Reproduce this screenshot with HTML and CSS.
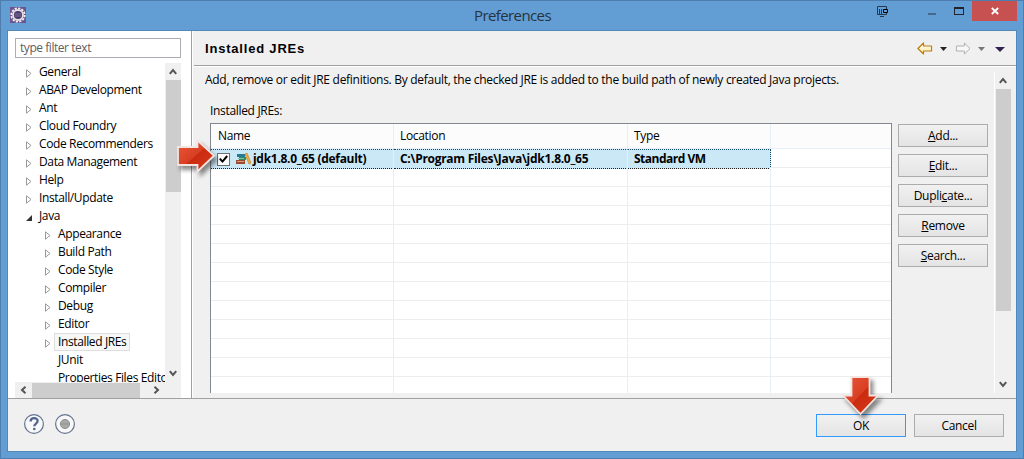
FILE: index.html
```
<!DOCTYPE html>
<html lang="en">
<head>
<meta charset="utf-8">
<title>Preferences</title>
<link rel="stylesheet" href="styles.css">
</head>
<body>
<div class="window">
  <header class="titlebar">
    <svg class="app-icon" width="16" height="16" viewBox="0 0 16 16"><rect width="16" height="16" fill="#6a5590"/><circle cx="8" cy="8" r="6.700" fill="none" stroke="#f4f0ee" stroke-width="1.800" stroke-dasharray="2.200 1.300"/><circle cx="8" cy="8" r="5" fill="#4a3a6c" stroke="#e6e0e2" stroke-width="1.800"/><path d="M4.500 7h7M4.500 9h7" stroke="#7d719c"/></svg>
    <h1 class="title">Preferences</h1>
    <svg class="dock-icon" width="12" height="12" viewBox="0 0 12 12"><path d="M.5 .5h9v8h-9zM2.500 3v5M4.500 3v5M3 10.500h4" fill="none" stroke="#27384b"/><path d="M6.500 3.500h4v3h-4z" fill="#629ed3" stroke="#000"/></svg>
    <i class="minimize"></i><i class="maximize"></i>
    <span class="close"><svg width="8" height="8" viewBox="0 0 8 8"><path d="M.8 1l6.400 6M7.200 1l-6.400 6" stroke="#fff" stroke-width="1.800"/></svg></span>
  </header>
  <main class="client">
    <div class="upper">
      <aside class="sidebar">
        <div class="filter">type filter text</div>
        <div class="tree-box">
          <ul class="tree">
            <li><svg class="tw"><use href="#closed"/></svg><span>General</span></li>
            <li><svg class="tw"><use href="#closed"/></svg><span>ABAP Development</span></li>
            <li><svg class="tw"><use href="#closed"/></svg><span>Ant</span></li>
            <li><svg class="tw"><use href="#closed"/></svg><span>Cloud Foundry</span></li>
            <li><svg class="tw"><use href="#closed"/></svg><span>Code Recommenders</span></li>
            <li><svg class="tw"><use href="#closed"/></svg><span>Data Management</span></li>
            <li><svg class="tw"><use href="#closed"/></svg><span>Help</span></li>
            <li><svg class="tw"><use href="#closed"/></svg><span>Install/Update</span></li>
            <li><svg class="tw"><use href="#open"/></svg><span>Java</span></li>
            <li class="child"><svg class="tw"><use href="#closed"/></svg><span>Appearance</span></li>
            <li class="child"><svg class="tw"><use href="#closed"/></svg><span>Build Path</span></li>
            <li class="child"><svg class="tw"><use href="#closed"/></svg><span>Code Style</span></li>
            <li class="child"><svg class="tw"><use href="#closed"/></svg><span>Compiler</span></li>
            <li class="child"><svg class="tw"><use href="#closed"/></svg><span>Debug</span></li>
            <li class="child"><svg class="tw"><use href="#closed"/></svg><span>Editor</span></li>
            <li class="child"><svg class="tw"><use href="#closed"/></svg><span class="chosen">Installed JREs</span></li>
            <li class="child"><svg class="tw"></svg><span>JUnit</span></li>
            <li class="child"><svg class="tw"></svg><span>Properties Files Editor</span></li>
          </ul>
          <div class="vscroll tree-v"><svg class="chev"><use href="#up"/></svg><i class="thumb"></i><svg class="chev end"><use href="#down"/></svg></div>
          <div class="hscroll"><svg class="hchev"><use href="#left"/></svg><i class="thumb"></i><svg class="hchev"><use href="#right"/></svg></div>
        </div>
      </aside>
      <section class="page">
        <div class="page-head">
          <h2>Installed JREs</h2>
          <svg class="nav" width="92" height="14" viewBox="0 0 92 14">
            <defs><linearGradient id="gold" x2="0" y2="1"><stop stop-color="#fff"/><stop offset="1" stop-color="#ffe9a0"/></linearGradient></defs>
            <path d="M.9 6.500L6.500 1v3h8v5h-8v3z" fill="url(#gold)" stroke="#bf7d11" stroke-width="1.200" stroke-linejoin="round"/>
            <path d="M23 5h7l-3.500 4z" fill="#222"/>
            <path d="M53 6.500L47.400 1v3h-8v5h8v3z" fill="#f7f7f7" stroke="#b0b0b0" stroke-linejoin="round"/>
            <path d="M61 5h7l-3.500 4z" fill="#77777b"/>
            <path d="M78 5h10l-5 5z" fill="#31214e"/>
          </svg>
        </div>
        <div class="page-scroll">
          <div class="content">
            <p class="desc">Add, remove or edit JRE definitions. By default, the checked JRE is added to the build path of newly created Java projects.</p>
            <p class="label">Installed <u>J</u>REs:</p>
            <div class="table-row">
              <div class="table">
                <div class="tr th"><span>Name</span><span>Location</span><span>Type</span><span></span></div>
                <div class="tr sel"><span class="name"><i class="check"><svg width="9" height="9" viewBox="0 0 9 9"><path d="M.8 3.600l2.700 3L8.200 1" fill="none" stroke="#000" stroke-width="2"/></svg></i><svg class="books" width="15" height="12" viewBox="0 0 15 12"><path d="M1 1h8v3H1z" fill="#27799a"/><path d="M3 4h7v3H3z" fill="#368c62"/><path d="M2 5h6v1H2z" fill="#7fc29b"/><path d="M0 7h9v4H0z" fill="#9c4a31"/><path d="M1 8.500h7" stroke="#d99a7c"/><path d="M9 1l2-1 4 10-2 1z" fill="#edb139" stroke="#c27b12" stroke-width=".6"/></svg><b>jdk1.8.0_65 (default)</b></span><span><b>C:\Program Files\Java\jdk1.8.0_65</b></span><span><b class="vm">Standard VM</b></span><span></span></div>
                <div class="tr"><span></span><span></span><span></span><span></span></div><div class="tr"><span></span><span></span><span></span><span></span></div><div class="tr"><span></span><span></span><span></span><span></span></div><div class="tr"><span></span><span></span><span></span><span></span></div><div class="tr"><span></span><span></span><span></span><span></span></div><div class="tr"><span></span><span></span><span></span><span></span></div><div class="tr"><span></span><span></span><span></span><span></span></div><div class="tr"><span></span><span></span><span></span><span></span></div><div class="tr"><span></span><span></span><span></span><span></span></div><div class="tr"><span></span><span></span><span></span><span></span></div><div class="tr"><span></span><span></span><span></span><span></span></div><div class="tr"><span></span><span></span><span></span><span></span></div>
              </div>
              <div class="actions">
                <button><span><u>A</u>dd...</span></button>
                <button><span><u>E</u>dit...</span></button>
                <button><span>Dupli<u>c</u>ate...</span></button>
                <button><span><u>R</u>emove</span></button>
                <button><span><u>S</u>earch...</span></button>
              </div>
            </div>
          </div>
          <div class="vscroll page-v"><svg class="chev"><use href="#up"/></svg><i class="thumb"></i><svg class="chev end"><use href="#down"/></svg></div>
        </div>
      </section>
    </div>
    <footer class="footer">
      <svg class="foot-icons" width="54" height="22" viewBox="0 0 54 22">
        <circle cx="11" cy="11" r="9.400" fill="#f8f8fa" stroke="#64748f" stroke-width="1.200"/>
        <path d="M7.600 8.500c0-4.300 7-4.300 7-.4 0 2.500-3.300 2.500-3.300 5.100" fill="none" stroke="#52658c" stroke-width="2.300"/><circle cx="11.300" cy="16" r="1.300" fill="#52658c"/>
        <circle cx="42" cy="11" r="9.400" fill="#f8f8fa" stroke="#64748f" stroke-width="1.200"/>
        <circle cx="42" cy="11" r="4.600" fill="#a8a8a8" stroke="#909090"/><path d="M38 11h8" stroke="#929292"/>
      </svg>
      <button class="ok"><span>OK</span></button>
      <button><span>Cancel</span></button>
    </footer>
  </main>
</div>
<svg class="callout right" width="46" height="42" viewBox="0 0 46 42">
  <defs><linearGradient id="red" x2="1" y2="1"><stop stop-color="#e8583c"/><stop offset=".48" stop-color="#d93f22"/><stop offset=".5" stop-color="#cb2c10"/><stop offset="1" stop-color="#d73a1c"/></linearGradient></defs>
  <path d="M2 9h19.500V2.500L38 17.700 21.500 33.500V27H2z" fill="url(#red)" stroke="#f3e4e0" stroke-width="1.800"/>
</svg>
<svg class="callout down" width="50" height="48" viewBox="0 0 50 48">
  <path d="M12.500 2h18v18.500h8.500L21.500 39 4 20.500h8.500z" fill="url(#red)" stroke="#f3e4e0" stroke-width="1.800"/>
</svg>
<svg class="defs">
  <symbol id="closed" viewBox="0 0 6 9"><path d="M.5 .8v7.400L5 4.500z" fill="#fff" stroke="#999"/></symbol>
  <symbol id="open" viewBox="0 0 6 9"><path d="M6 2v6H0z" fill="#333"/></symbol>
  <symbol id="up" viewBox="0 0 8 7"><path d="M.8 5.800L4 2l3.200 3.800" fill="none" stroke="#555" stroke-width="2"/></symbol>
  <symbol id="down" viewBox="0 0 8 7"><path d="M.8 1.200L4 5l3.200-3.800" fill="none" stroke="#555" stroke-width="2"/></symbol>
  <symbol id="left" viewBox="0 0 7 8"><path d="M5.500 .8L2 4l3.500 3.200" fill="none" stroke="#555" stroke-width="2"/></symbol>
  <symbol id="right" viewBox="0 0 7 8"><path d="M1.500 .8L5 4 1.500 7.200" fill="none" stroke="#555" stroke-width="2"/></symbol>
</svg>
</body>
</html>
```
FILE: styles.css
```
* { box-sizing: border-box; }
body { margin: 0; width: 1024px; height: 459px; overflow: hidden; font: 12px/18px "Open Sans", "Noto Sans", sans-serif; letter-spacing: -.32px; color: #000; }
h1, h2, p, ul { margin: 0; padding: 0; list-style: none; font-weight: 400; }
svg { display: block; flex: none; }
i { display: block; flex: none; }
.window { height: 459px; border: 1px solid #4d7eaf; background: #629ed3; display: flex; flex-direction: column; padding: 0 6px 6px; }
.titlebar { height: 29px; flex: none; display: flex; align-items: flex-start; }
.app-icon { margin: 6px 0 0 3px; }
.title { font-size: 15px; line-height: 29px; width: 77px; margin-left: 448px; letter-spacing: -.6px; color: #26333f; white-space: nowrap; }
.dock-icon { margin: 5px 0 0 326px; }
.minimize { width: 8px; height: 2px; background: #47698b; margin: 12px 0 0 39px; }
.maximize { width: 10px; height: 8px; border: 1px solid #20252b; border-top-width: 2px; margin: 6px 0 0 18px; }
.close { width: 45px; height: 20px; background: #c75050; display: flex; align-items: center; justify-content: center; margin-left: 8px; flex: none; }
.client { flex: 1; border: 1px solid #5088ba; background: #f0f0f0; display: flex; flex-direction: column; min-height: 0; }
.upper { height: 368px; flex: none; display: flex; border-bottom: 1px solid #a0a0a0; }
.sidebar { width: 184px; flex: none; background: #fff; border-right: 1px solid #a0a0a0; padding: 7px 10px 0 7px; }
.filter { width: 166px; height: 20px; border: 1px solid #abadb3; padding: 0 4px; line-height: 18px; color: #5e5e5e; letter-spacing: -.45px; }
.tree-box { margin-top: 5px; width: 166px; height: 335px; display: grid; grid-template-columns: 150px 16px; grid-template-rows: 319px 16px; background: #f0f0f0; }
.tree { overflow: hidden; background: #fff; }
.tree li { height: 18px; display: flex; align-items: center; padding-left: 11px; white-space: nowrap; }
.tree .child { padding-left: 30px; }
.tw { width: 6px; height: 9px; margin: 3px 7px 0 0; }
.tree span { line-height: 18px; letter-spacing: -.37px; }
.tree .chosen { border: 1px solid #dedede; background: #f7f7f7; margin-left: -4px; padding: 0 3px; line-height: 16px; }
.vscroll { display: flex; flex-direction: column; align-items: center; background: #f0f0f0; }
.thumb { background: #cdcdcd; }
.chev { width: 8px; height: 7px; margin: 5px 0; }
.hchev { width: 7px; height: 8px; margin: 0 5px; }
.tree-v .thumb { width: 15px; height: 112px; }
.vscroll .end { margin-top: auto; }
.hscroll { display: flex; align-items: center; }
.hscroll .thumb { width: 108px; height: 15px; }
.hscroll .hchev:last-child { margin-left: 13px; }
.page { flex: 1; min-width: 0; padding-left: 1px; background: #f0f0f0; border-left: 1px solid #fff; }
.page-head { height: 35px; border-bottom: 1px solid #a0a0a0; display: flex; align-items: center; padding-left: 11px; box-shadow: 0 1px #fff; }
.page-head h2 { font: bold 13px/18px "Liberation Sans", Arial, sans-serif; letter-spacing: .8px; padding-top: 1px; }
.nav { margin: 1px 7px 0 auto; }
.page-scroll { display: flex; height: 326px; margin-top: 1px; overflow: hidden; }
.content { width: 800px; flex: none; padding-left: 11px; }
.desc { padding-top: 4px; white-space: nowrap; letter-spacing: -.287px; }
.label { margin: 13px 0 3px 5px; }
.table-row { display: flex; gap: 6px; margin-left: 5px; }
.table { width: 682px; height: 300px; border: 1px solid #828790; background: #fff; }
.tr { display: grid; grid-template-columns: 183px 234px 143px 1fr; height: 19px; border-bottom: 1px solid #ededed; }
.tr > span { border-right: 1px solid #e6eef8; padding-left: 6px; display: flex; align-items: center; white-space: nowrap; }
.tr > span:last-child { border-right: 0; }
.tr.th { height: 25px; background: #fcfcfc; border-bottom-color: #e9eff8; }
.tr.th > span:first-child { padding-left: 7px; }
.tr.sel > span:not(:last-child) { background: #cbe8f6; border-top: 1px dotted #164b63; border-bottom: 1px dotted #222; }
.tr.sel > span:nth-child(3) { border-right: 1px dotted #164b63; }
b { font-weight: 700; letter-spacing: -.29px; }
.vm { letter-spacing: -.5px; }
.check { width: 13px; height: 13px; background: #fff; border: 1px solid #707070; padding: 1px; }
.books { margin: 0 2px 0 6px; }
.actions { display: flex; flex-direction: column; gap: 7px; padding-top: 1px; }
button { width: 90px; height: 23px; padding: 0; border: 1px solid #acacac; background: linear-gradient(#f1f1f1, #e4e4e4); font: inherit; letter-spacing: inherit; color: #000; }
button span { display: block; line-height: 20px; }
u { text-underline-offset: 1px; }
.page-v { width: 17px; height: 321px; margin-top: 5px; border-left: 1px solid #fff; }
.page-v .thumb { width: 15px; height: 222px; }
.footer { flex: 1; display: flex; align-items: flex-start; padding: 15px 12px 0 15px; gap: 8px; }
.foot-icons { margin: -1px auto 0 0; }
.ok { border-color: #3399ff; }
.callout { position: absolute; filter: drop-shadow(3px 4px 2px rgba(0,0,0,.45)); }
.right { left: 176px; top: 138px; }
.down { left: 839px; top: 375px; }
.defs { position: absolute; width: 0; height: 0; }
```
